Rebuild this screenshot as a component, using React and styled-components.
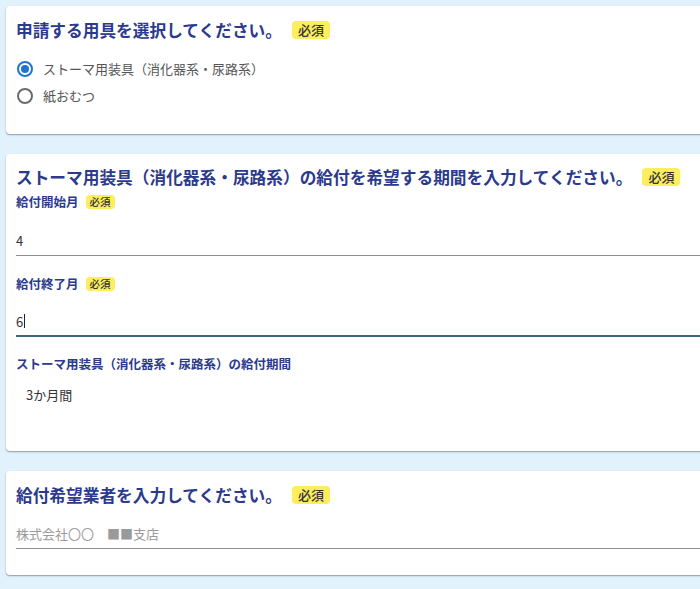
import React from "react";
import styled, { createGlobalStyle } from "styled-components";

const GlobalStyle = createGlobalStyle`
  html, body {
    margin: 0;
    padding: 0;
    background: #e2f2fc;
    overflow: hidden;
  }
  body {
    font-family: "Noto Sans CJK JP", "Noto Sans", sans-serif;
    color: #333;
  }
`;

const Page = styled.div`
  display: flex;
  flex-direction: column;
  gap: 20px;
  padding: 6px 0 20px 6px;
`;

const Card = styled.section`
  width: 730px;
  box-sizing: border-box;
  background: #fff;
  border-radius: 4px;
  box-shadow: 0 1px 2px rgba(0, 0, 0, 0.28), 0 1px 1px rgba(0, 0, 0, 0.12);
  padding: ${(p) => p.$pad || "12px 0 24px 10px"};
`;

const Title = styled.h2`
  margin: 0;
  font-size: 16.7px;
  line-height: 24px;
  font-weight: 700;
  color: #2b3a8c;
  display: flex;
  align-items: center;
`;

const Badge = styled.span`
  display: inline-block;
  background: #fcee5c;
  color: #333;
  border-radius: 4px;
  font-weight: 500;
  font-size: ${(p) => (p.$small ? "10.5px" : "13px")};
  line-height: ${(p) => (p.$small ? "14px" : "18px")};
  padding: ${(p) => (p.$small ? "0 4px" : "0 6px")};
  margin-left: ${(p) => (p.$small ? "7px" : "10px")};
`;

const RadioGroup = styled.div`
  display: flex;
  flex-direction: column;
  margin-top: 13px;
  padding-left: 1px;
`;

const RadioRow = styled.label`
  display: flex;
  align-items: center;
  height: 27px;
  font-size: 13px;
  color: #555;
  gap: 10px;
`;

const RadioCircle = styled.span`
  width: 16px;
  height: 16px;
  box-sizing: border-box;
  border-radius: 50%;
  border: 2px solid ${(p) => (p.$checked ? "#1e74d0" : "#6b6b6b")};
  display: flex;
  align-items: center;
  justify-content: center;

  &::after {
    content: "";
    width: 8px;
    height: 8px;
    border-radius: 50%;
    background: ${(p) => (p.$checked ? "#1e74d0" : "transparent")};
  }
`;

const FieldLabel = styled.div`
  display: flex;
  align-items: center;
  font-size: 12.5px;
  line-height: 18px;
  font-weight: 700;
  color: #2b3a8c;
  margin-top: ${(p) => p.$mt || "0px"};
`;

const InputBox = styled.div`
  height: 30px;
  box-sizing: border-box;
  display: flex;
  align-items: center;
  font-size: 13px;
  color: ${(p) => (p.$placeholder ? "#9a9a9a" : "#333")};
  border-bottom: ${(p) => (p.$focused ? "2px solid #3a6784" : "1px solid #8f8f8f")};
  padding-bottom: ${(p) => (p.$focused ? "0" : "1px")};
  margin-top: ${(p) => p.$mt || "13px"};
`;

const Caret = styled.span`
  display: inline-block;
  width: 1px;
  height: 14px;
  background: #222;
  margin-left: 1px;
`;

const ValueText = styled.div`
  font-size: 13px;
  line-height: 20px;
  color: #333;
  padding-left: 10px;
  margin-top: 12px;
`;

export default function App() {
  return (
    <>
      <GlobalStyle />
      <Page>
        <Card $pad="12px 0 25px 10px">
          <Title>
            申請する用具を選択してください。<Badge>必須</Badge>
          </Title>
          <RadioGroup>
            <RadioRow>
              <RadioCircle $checked />
              ストーマ用装具（消化器系・尿路系）
            </RadioRow>
            <RadioRow>
              <RadioCircle />
              紙おむつ
            </RadioRow>
          </RadioGroup>
        </Card>

        <Card $pad="11px 0 46px 10px">
          <Title>
            ストーマ用装具（消化器系・尿路系）の給付を希望する期間を入力してください。
            <Badge>必須</Badge>
          </Title>
          <FieldLabel $mt="4px">
            給付開始月<Badge $small>必須</Badge>
          </FieldLabel>
          <InputBox $mt="15px">4</InputBox>
          <FieldLabel $mt="19px">
            給付終了月<Badge $small>必須</Badge>
          </FieldLabel>
          <InputBox $focused $mt="14px">
            6<Caret />
          </InputBox>
          <FieldLabel $mt="18px">ストーマ用装具（消化器系・尿路系）の給付期間</FieldLabel>
          <ValueText>3か月間</ValueText>
        </Card>

        <Card $pad="12px 0 26px 10px">
          <Title>
            給付希望業者を入力してください。<Badge>必須</Badge>
          </Title>
          <InputBox $placeholder $mt="12px">
            株式会社〇〇　■■支店
          </InputBox>
        </Card>
      </Page>
    </>
  );
}
